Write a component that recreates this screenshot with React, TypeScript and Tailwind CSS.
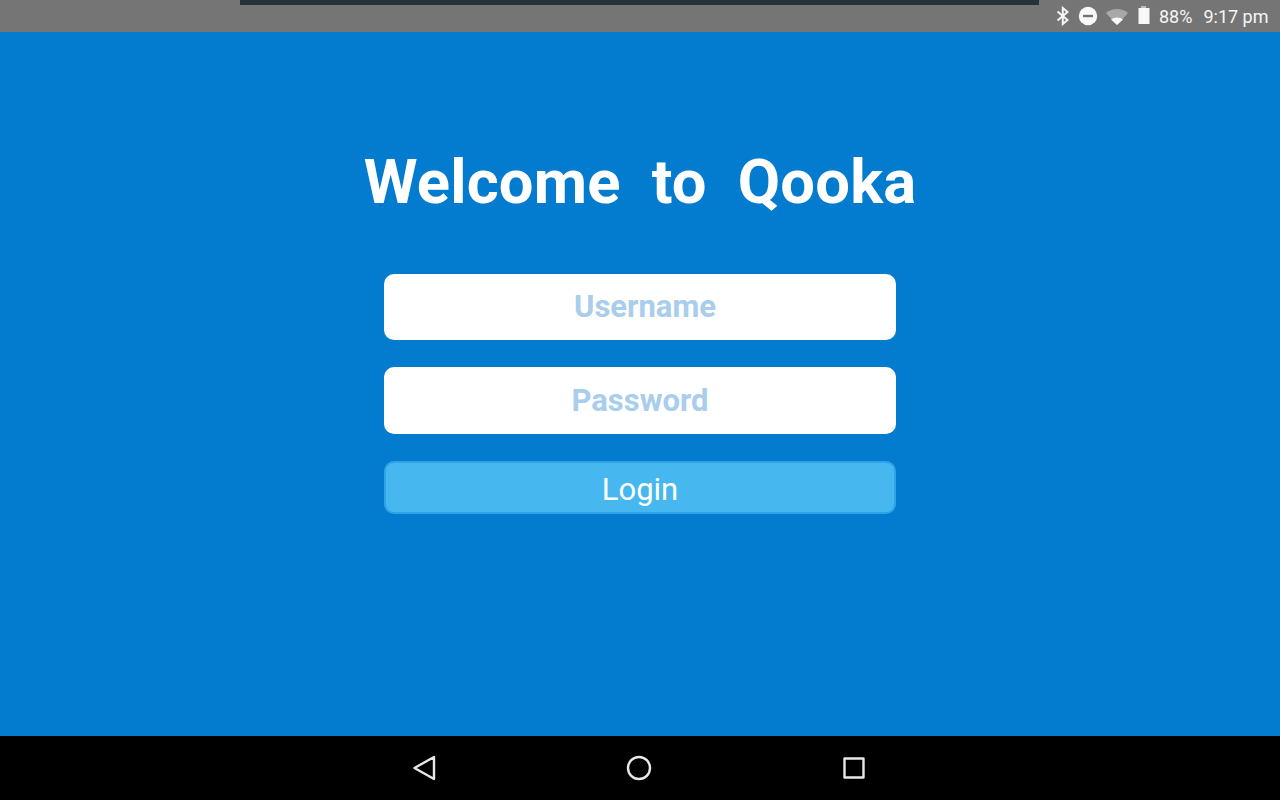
function StatusIcons() {
  return (
    <div className="flex items-center">
      <svg width="14" height="20" viewBox="0 0 14 20" className="ml-[1056px]" fill="none" stroke="#f5f5f5" strokeWidth="2">
        <path d="M1.5 5.5 L11.5 14 L6.8 18 V2 L11.5 6 L1.5 14.5" />
      </svg>
      <svg width="20" height="20" viewBox="0 0 20 20" className="ml-[8px]">
        <circle cx="10" cy="10" r="9.2" fill="#f8f8f8" />
        <rect x="5" y="8.8" width="10" height="2.4" fill="#757575" />
      </svg>
      <svg width="24" height="18" viewBox="0 0 24 18" className="ml-[7px]">
        <path d="M1 6 C7 0.5 17 0.5 23 6 L12 18 Z" fill="#a8a8a8" />
        <path d="M6 12.5 C9 9.8 15 9.8 18 12.5 L12 18 Z" fill="#f8f8f8" />
      </svg>
      <svg width="14" height="20" viewBox="0 0 14 20" className="ml-[8px] mb-[3px]">
        <path d="M4 1 H9 V3 H4 Z" fill="#bdbdbd" />
        <path d="M1.5 3 H12.5 V19 H1.5 Z" fill="#f8f8f8" />
      </svg>
    </div>
  );
}

function NavBar() {
  return (
    <div className="h-16 bg-black flex items-center shrink-0">
      <svg width="24" height="26" viewBox="0 0 24 26" className="ml-[413px]" fill="none" stroke="#e8e8e8" strokeWidth="2.4" strokeLinejoin="round">
        <path d="M1.5 13 L21 2 V24 Z" />
      </svg>
      <svg width="26" height="26" viewBox="0 0 26 26" className="ml-[189px]" fill="none" stroke="#e8e8e8" strokeWidth="2.4">
        <circle cx="13" cy="13" r="11" />
      </svg>
      <svg width="22" height="22" viewBox="0 0 22 22" className="ml-[191px]" fill="none" stroke="#e8e8e8" strokeWidth="2.4" strokeLinejoin="round">
        <rect x="1.5" y="1.5" width="19" height="19" />
      </svg>
    </div>
  );
}

export default function App() {
  return (
    <div className="w-[1280px] h-[800px] flex flex-col overflow-hidden bg-[#037bcf] font-['Roboto',sans-serif]">
      <div className="h-8 bg-[#757575] relative flex items-center shrink-0">
        <div className="absolute left-[240px] top-0 w-[799px] h-[5px] bg-[#263238]" />
        <StatusIcons />
        <span className="ml-[8px] mt-[1px] text-[18px] text-[#f5f5f5]">88%</span>
        <span className="ml-[11px] mt-[1px] text-[18px] text-[#f5f5f5]">9:17 pm</span>
      </div>

      <div className="flex-1 flex flex-col items-center">
        <h1 className="mt-[112px] h-[76px] leading-[76px] text-[61.5px] font-bold text-white whitespace-pre tracking-[0.2px]">
          Welcome  to  Qooka
        </h1>
        <div className="mt-[54px] w-[512px] h-[66px] bg-white rounded-[10px] flex items-center justify-center pl-[10px] text-[31px] font-bold text-[#a9cdec]">
          Username
        </div>
        <div className="mt-[27px] w-[512px] h-[67px] bg-white rounded-[10px] flex items-center justify-center pt-[2px] text-[31px] font-bold text-[#a9cdec]">
          Password
        </div>
        <button className="mt-[27px] w-[512px] h-[53px] bg-[#46b8ef] border-2 border-[#2ea3e8] rounded-[10px] pt-[5px] text-[31px] leading-[36px] text-white">
          Login
        </button>
      </div>

      <NavBar />
    </div>
  );
}
